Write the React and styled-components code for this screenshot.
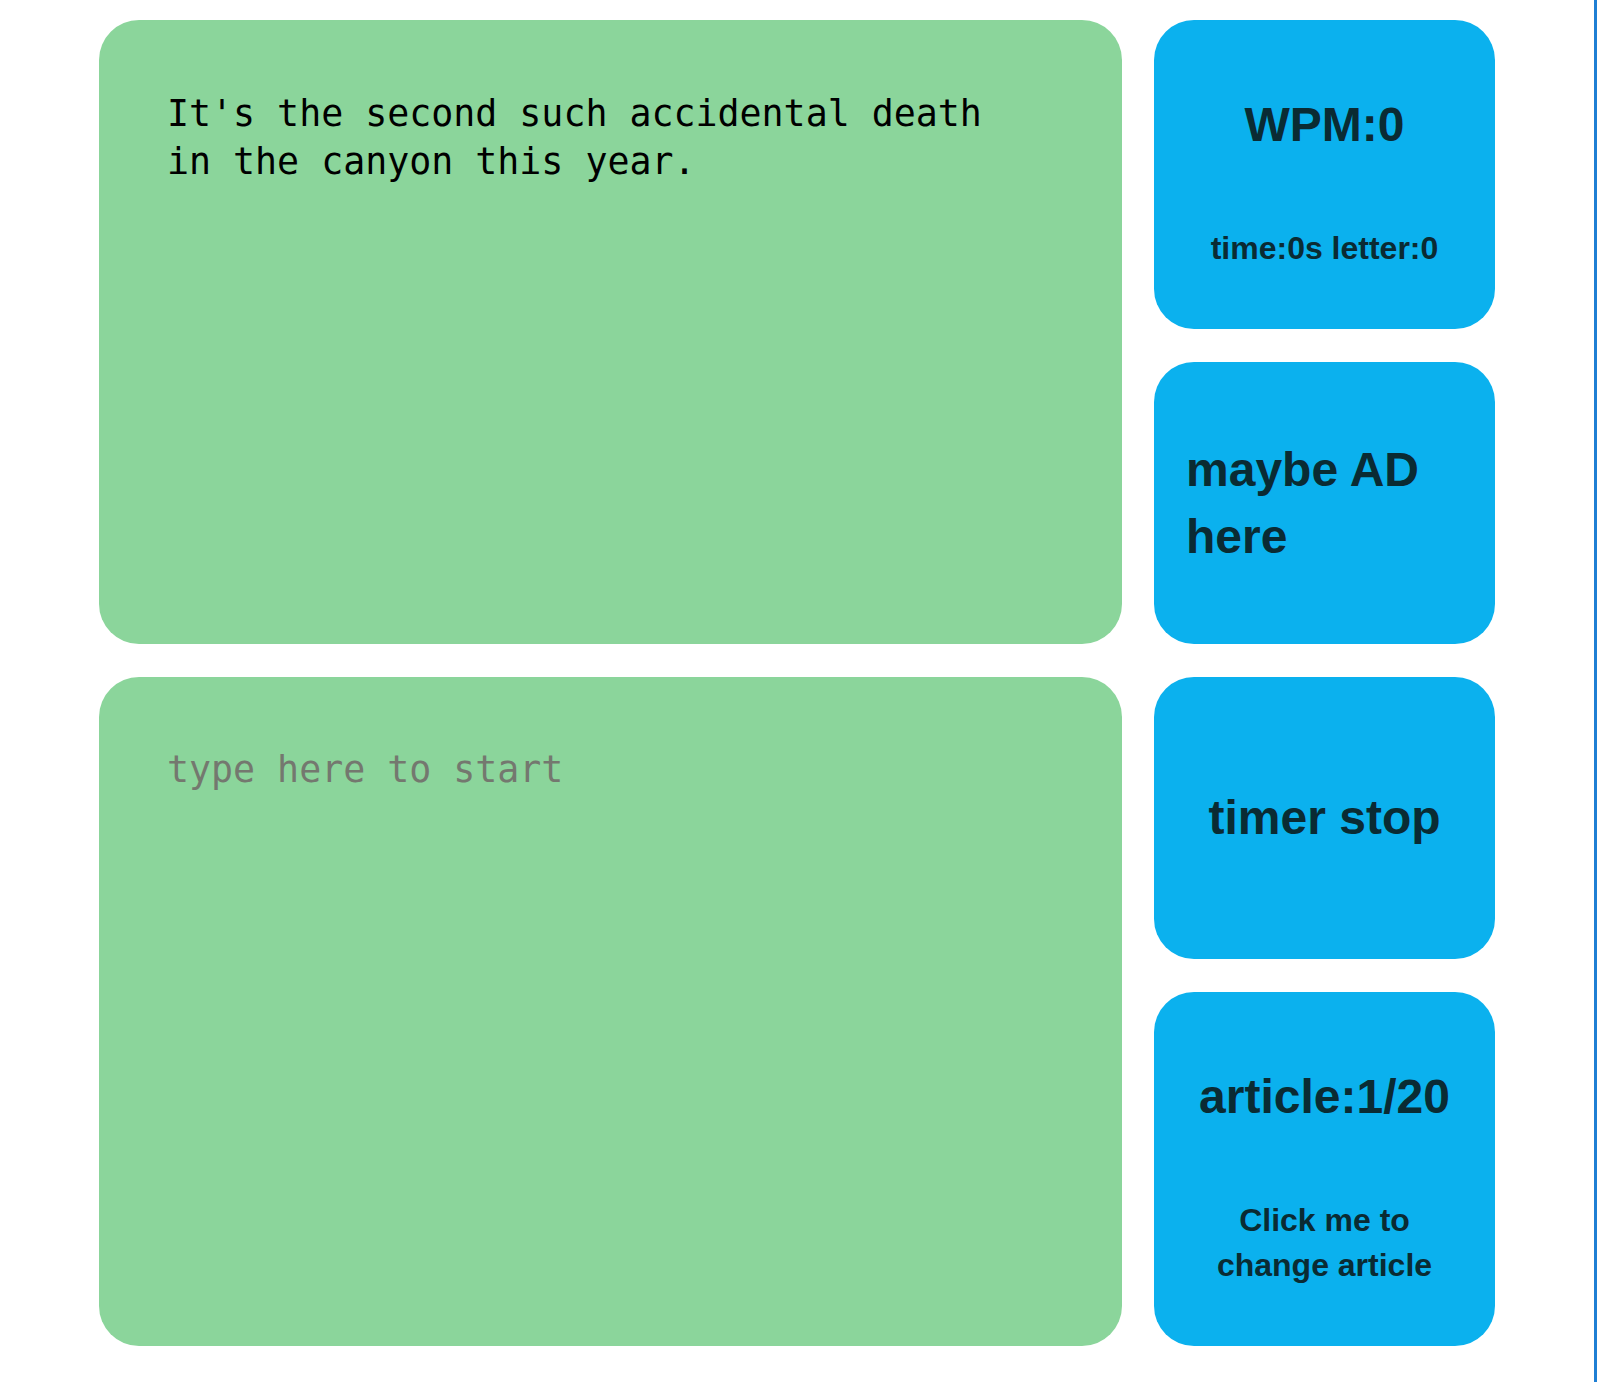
import React from 'react';
import styled, { createGlobalStyle } from 'styled-components';

const GlobalStyle = createGlobalStyle`
  html, body {
    margin: 0;
    padding: 0;
    background: #ffffff;
  }

  * {
    box-sizing: border-box;
  }
`;

const Page = styled.div`
  min-height: 100vh;
  display: flex;
  justify-content: center;
  align-items: flex-start;
  padding: 20px 0 36px;
  border-right: 3px solid #1f7fd4;
`;

const Board = styled.div`
  display: grid;
  grid-template-columns: 1023px 341px;
  gap: 33px 32px;
`;

const Panel = styled.div`
  background: #8bd59b;
  border-radius: 40px;
  overflow: hidden;
  display: flex;
`;

const Passage = styled.div`
  padding: 70px 66px 68px 68px;
  font-family: "DejaVu Sans Mono", "Liberation Mono", monospace;
  font-size: 36.6px;
  line-height: 48px;
  color: #000;
`;

const PassageText = styled.p`
  margin: 0;
  max-width: 850px;
`;

const TypeArea = styled.textarea`
  flex: 1;
  width: 100%;
  padding: 69px 66px 68px 68px;
  border: none;
  outline: none;
  resize: none;
  background: transparent;
  font-family: "DejaVu Sans Mono", "Liberation Mono", monospace;
  font-size: 36.6px;
  line-height: 48px;
  color: #000;

  &::placeholder {
    color: #74786f;
  }
`;

const Side = styled.div`
  display: flex;
  flex-direction: column;
  gap: 33px;
`;

const Card = styled.div`
  background: #0bb1ee;
  border-radius: 40px;
  color: #0a2b33;
  font-family: "Liberation Sans", Arial, sans-serif;
  font-weight: 700;
  display: flex;
  flex-direction: column;
  align-items: ${(p) => (p.$left ? 'flex-start' : 'center')};
  text-align: ${(p) => (p.$left ? 'left' : 'center')};
`;

const StatCard = styled(Card)`
  padding: 71px 24px 58px;
  gap: 68px;
`;

const NoteCard = styled(Card)`
  min-height: 282px;
  justify-content: center;
  padding: 0 32px;
`;

const Big = styled.div`
  font-size: 48px;
  line-height: 1.4;
`;

const Small = styled.div`
  font-size: 32px;
  line-height: 1.4;
  max-width: ${(p) => (p.$wide ? 'none' : '240px')};
`;

export default function App() {
  return (
    <>
      <GlobalStyle />
      <Page>
        <Board>
          <Panel>
            <Passage>
              <PassageText>
                It's the second such accidental death in the canyon this year.
              </PassageText>
            </Passage>
          </Panel>
          <Side>
            <StatCard>
              <Big>WPM:0</Big>
              <Small $wide>time:0s letter:0</Small>
            </StatCard>
            <NoteCard $left>
              <Big>maybe AD here</Big>
            </NoteCard>
          </Side>
          <Panel>
            <TypeArea placeholder="type here to start" />
          </Panel>
          <Side>
            <NoteCard>
              <Big>timer stop</Big>
            </NoteCard>
            <StatCard>
              <Big>article:1/20</Big>
              <Small>Click me to change article</Small>
            </StatCard>
          </Side>
        </Board>
      </Page>
    </>
  );
}
